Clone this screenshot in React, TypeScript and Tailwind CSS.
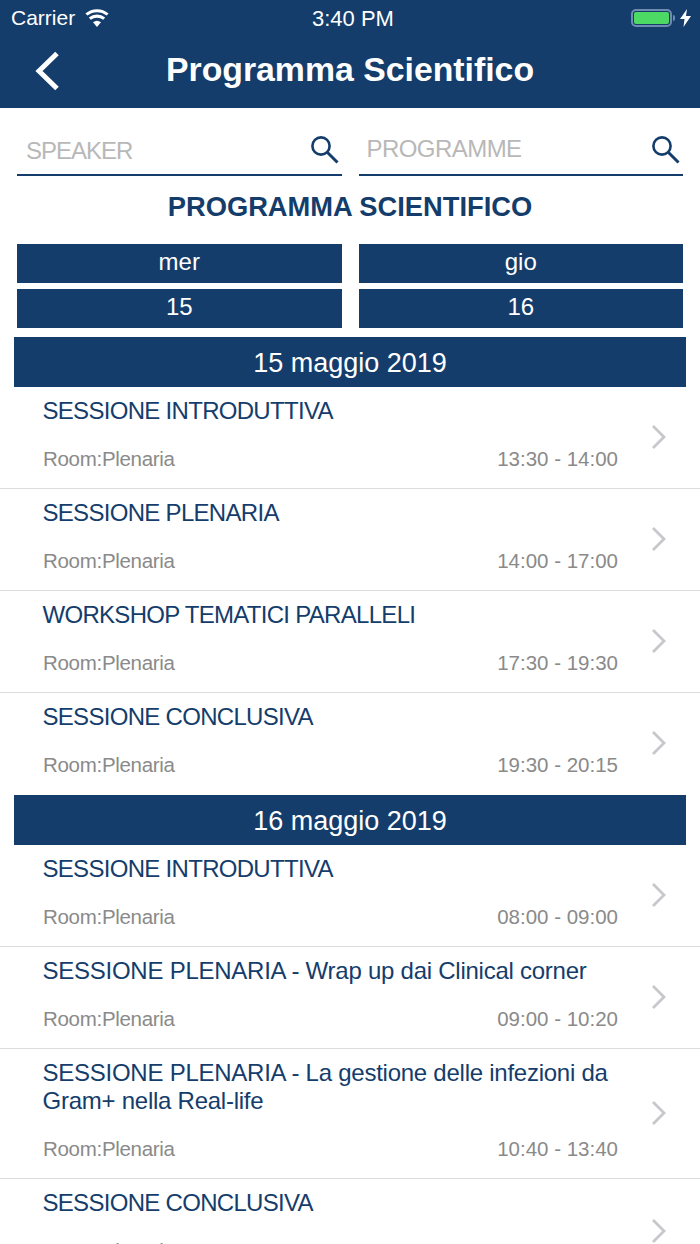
import React from 'react';

const NAVY = 'bg-[#153d6b]';

type Session = { title: string; time: string; tall?: boolean; caps?: boolean; low?: boolean };

const FIRST_DAY: Session[] = [
  { title: 'SESSIONE INTRODUTTIVA', time: '13:30 - 14:00', caps: true },
  { title: 'SESSIONE PLENARIA', time: '14:00 - 17:00', caps: true },
  { title: 'WORKSHOP TEMATICI PARALLELI', time: '17:30 - 19:30', caps: true },
  { title: 'SESSIONE CONCLUSIVA', time: '19:30 - 20:15', caps: true },
];

const SECOND_DAY: Session[] = [
  { title: 'SESSIONE INTRODUTTIVA', time: '08:00 - 09:00', caps: true },
  { title: 'SESSIONE PLENARIA - Wrap up dai Clinical corner', time: '09:00 - 10:20' },
  { title: 'SESSIONE PLENARIA - La gestione delle infezioni da Gram+ nella Real-life', time: '10:40 - 13:40', tall: true },
  { title: 'SESSIONE CONCLUSIVA', time: '13:40 - 14:00', caps: true, low: true },
];

function SearchIcon() {
  return (
    <svg width="30" height="30" viewBox="0 0 30 30" fill="none" stroke="#153d6b" className="shrink-0">
      <circle cx="11" cy="11" r="8.6" strokeWidth="2.6" />
      <path d="M17.5 17.5 L27.5 27.5" strokeWidth="3" />
    </svg>
  );
}

function SearchField({ label, className }: { label: string; className: string }) {
  return (
    <div className="flex h-[68px] flex-1 items-start justify-between border-b-2 border-[#153d6b] pt-[27px] pr-[2px]">
      <span className={`pl-[9px] text-[24px] leading-[30px] text-[#b8b8b8] ${className}`}>{label}</span>
      <SearchIcon />
    </div>
  );
}

function SessionRow({ session, last }: { session: Session; last?: boolean }) {
  const chevronTop = session.tall ? 'top-[51px]' : session.low ? 'top-[39px]' : 'top-[37px]';
  return (
    <div className={`relative pl-[43px] pr-[70px] ${last ? '' : 'border-b border-[#dcdcdc]'} ${session.tall ? 'h-[130px]' : 'h-[102px]'}`}>
      <div className={`-ml-[0.5px] pt-[10px] text-[24px] leading-[28px] text-[#153d6b] ${session.caps ? 'tracking-[-0.7px]' : 'tracking-[-0.25px]'}`}>
        {session.title}
      </div>
      <div className={`absolute left-[43px] right-[82px] flex justify-between text-[20.5px] leading-[26px] text-[#8a8a8a] ${last ? 'bottom-[17px]' : 'bottom-[16px]'}`}>
        <span className="tracking-[-0.3px]">Room:Plenaria</span>
        <span>{session.time}</span>
      </div>
      <svg width="16" height="26" viewBox="0 0 16 26" fill="none" stroke="#c7c7cc" strokeWidth="2.8" className={`absolute right-[33px] ${chevronTop}`}>
        <path d="M2 2 L13 13 L2 24" />
      </svg>
    </div>
  );
}

function DayBar({ label }: { label: string }) {
  return (
    <div className={`mx-[14px] flex h-[50px] items-center justify-center pt-[2px] text-[27px] text-white ${NAVY}`}>{label}</div>
  );
}

export default function App() {
  return (
    <div className="h-[1244px] w-[700px] overflow-hidden bg-white font-['Liberation_Sans',Arial,sans-serif]">
      {/* status bar + nav */}
      <div className={`h-[108px] ${NAVY} text-white`}>
        <div className="relative flex h-[36px] items-center justify-between pl-[11px] pr-[9px] text-[21px]">
          <div className="flex items-center gap-[10px]">
            <span>Carrier</span>
            <svg width="24" height="18" viewBox="0 0 24 18" fill="white">
              <path d="M12 18 L8 13.2 A6.5 6.5 0 0 1 16 13.2 Z" />
              <path d="M5.8 10.8 L3.8 8.4 A13 13 0 0 1 20.2 8.4 L18.2 10.8 A10 10 0 0 0 5.8 10.8 Z" />
              <path d="M2.4 6.6 L0.4 4.4 A18 18 0 0 1 23.6 4.4 L21.6 6.6 A15 15 0 0 0 2.4 6.6 Z" />
            </svg>
          </div>
          <span className="absolute left-[312px] text-[22px]">3:40 PM</span>
          <div className="flex items-center">
            <div className="flex h-[18px] w-[41px] items-center rounded-[5px] border-2 border-[#6f8cb0] p-px">
              <div className="h-full w-full rounded-[2px] bg-[#4cd964]" />
            </div>
            <div className="ml-px h-[6px] w-[2px] rounded-r-sm bg-[#6f8cb0]" />
            <svg width="11" height="18" viewBox="0 0 11 18" fill="white" className="ml-[5px]">
              <path d="M7 0 L0 10 L4.5 10 L3.5 18 L11 7 L6 7 Z" />
            </svg>
          </div>
        </div>
        <div className="relative flex h-[68px] items-center justify-center pb-[2px]">
          <svg width="28" height="40" viewBox="0 0 28 40" fill="none" stroke="white" strokeWidth="5" className="absolute left-[34px] top-[15px]">
            <path d="M23 2.5 L5 20 L23 37.5" />
          </svg>
          <span className="text-[33.8px] font-bold">Programma Scientifico</span>
        </div>
      </div>

      {/* search */}
      <div className="flex gap-[17px] px-[17px]">
        <SearchField label="SPEAKER" className="mt-[1px] tracking-[-1px]" />
        <SearchField label="PROGRAMME" className="-mt-[1px] -ml-px tracking-[-0.55px]" />
      </div>

      <div className="pt-[15px] text-center text-[27.3px] font-bold leading-[32px] text-[#153d6b]">PROGRAMMA SCIENTIFICO</div>

      {/* day picker */}
      <div className="grid grid-cols-2 gap-x-[17px] gap-y-[6px] px-[17px] pt-[21px] text-center text-[24px] text-white">
        {['mer', 'gio', '15', '16'].map((label) => (
          <div key={label} className={`flex h-[39px] items-center justify-center pb-[4px] ${NAVY}`}>{label}</div>
        ))}
      </div>

      <div className="pt-[9px]">
        <DayBar label="15 maggio 2019" />
        {FIRST_DAY.map((s, i) => (
          <SessionRow key={s.title} session={s} last={i === FIRST_DAY.length - 1} />
        ))}
        <DayBar label="16 maggio 2019" />
        {SECOND_DAY.map((s) => (
          <SessionRow key={s.title} session={s} />
        ))}
      </div>
    </div>
  );
}
